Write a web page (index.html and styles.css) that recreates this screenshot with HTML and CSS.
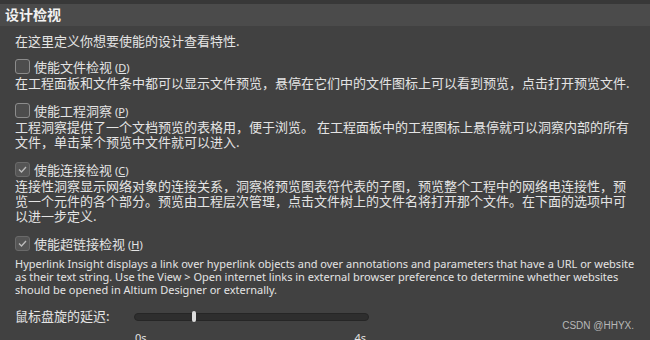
FILE: index.html
```html
<!DOCTYPE html>
<html lang="zh">
<head>
    <meta charset="UTF-8">
    <title>设计检视</title>
    <link rel="stylesheet" href="styles.css">
</head>
<body>
    <div class="panel">
        <div class="panel-title">设计检视</div>

        <div class="panel-body">
            <p class="intro">在这里定义你想要使能的设计查看特性.</p>

            <div class="option">
                <label class="check-row">
                    <span class="box"></span>
                    <span class="label">使能文件检视 <span class="key">(<u>D</u>)</span></span>
                </label>
                <p class="desc">在工程面板和文件条中都可以显示文件预览，悬停在它们中的文件图标上可以看到预览，点击打开预览文件.</p>
            </div>

            <div class="option">
                <label class="check-row">
                    <span class="box"></span>
                    <span class="label">使能工程洞察 <span class="key">(<u>P</u>)</span></span>
                </label>
                <p class="desc">工程洞察提供了一个文档预览的表格用，便于浏览。 在工程面板中的工程图标上悬停就可以洞察内部的所有文件，单击某个预览中文件就可以进入.</p>
            </div>

            <div class="option">
                <label class="check-row">
                    <span class="box checked">
                        <svg width="11" height="11" viewBox="0 0 11 11"><path d="M2 5.5 L4.5 8 L9 3" fill="none" stroke="#bdbdbd" stroke-width="1.3"/></svg>
                    </span>
                    <span class="label">使能连接检视 <span class="key">(<u>C</u>)</span></span>
                </label>
                <p class="desc">连接性洞察显示网络对象的连接关系，洞察将预览图表符代表的子图，预览整个工程中的网络电连接性，预览一个元件的各个部分。预览由工程层次管理，点击文件树上的文件名将打开那个文件。在下面的选项中可以进一步定义.</p>
            </div>

            <div class="option">
                <label class="check-row">
                    <span class="box checked">
                        <svg width="11" height="11" viewBox="0 0 11 11"><path d="M2 5.5 L4.5 8 L9 3" fill="none" stroke="#bdbdbd" stroke-width="1.3"/></svg>
                    </span>
                    <span class="label">使能超链接检视 <span class="key">(<u>H</u>)</span></span>
                </label>
                <p class="desc en">Hyperlink Insight displays a link over hyperlink objects and over annotations and parameters that have a URL or website as their text string. Use the View &gt; Open internet links in external browser preference to determine whether websites should be opened in Altium Designer or externally.</p>
            </div>

            <div class="delay-row">
                <span class="delay-label">鼠标盘旋的延迟:</span>
                <div class="slider">
                    <div class="track"><span class="thumb"></span></div>
                    <div class="ticks"><span>0s</span><span>4s</span></div>
                </div>
            </div>
        </div>

        <div class="watermark">CSDN @HHYX.</div>
    </div>
</body>
</html>
```

FILE: styles.css
```css
/* Panneau sombre */
body {
    margin: 0;
    background-color: #414141;
    font-family: "Noto Sans CJK SC", "Noto Sans", sans-serif;
    color: #e4e4e4;
    overflow: hidden;
}

.panel {
    position: relative;
    width: 650px;
    height: 340px;
    border-top: 4px solid #383838;
    box-sizing: border-box;
}

.panel-title {
    background-color: #4b4b4b;
    height: 22px;
    line-height: 21px;
    padding-left: 5px;
    font-size: 14px;
    font-weight: bold;
    color: #f2f2f2;
}

.panel-body {
    padding: 0 12px 0 15px;
}

.intro {
    margin: 6px 0 0;
    font-size: 13px;
    line-height: 17px;
}

.option {
    margin-top: 12px;
}

.intro + .option {
    margin-top: 9px;
}

.check-row {
    display: flex;
    align-items: center;
    gap: 4px;
    height: 17px;
    font-size: 13px;
}

.box {
    width: 13px;
    height: 13px;
    border: 1px solid #8c8c8c;
    border-radius: 3px;
    background-color: #4d4d4d;
    display: flex;
    align-items: center;
    justify-content: center;
}

.box.checked {
    border-color: #6a6a6a;
    background-color: #555;
}

.key {
    font-family: "Noto Sans", sans-serif;
    font-size: 11px;
}

.desc {
    margin: 0;
    font-size: 13px;
    line-height: 15px;
}

.desc.en {
    margin-top: 5px;
    font-family: "Noto Sans", sans-serif;
    font-size: 11px;
    line-height: 13px;
}

.delay-row {
    display: flex;
    align-items: flex-start;
    margin-top: 11px;
    font-size: 13px;
}

.delay-label {
    width: 119px;
    line-height: 17px;
}

.slider {
    width: 235px;
    padding-top: 6px;
}

.track {
    position: relative;
    height: 6px;
    background-color: #2e2e2e;
    border: 1px solid #262626;
    border-radius: 4px;
}

.thumb {
    position: absolute;
    left: 57px;
    top: -3px;
    width: 4px;
    height: 11px;
    border-radius: 2px;
    background-color: #dcdcdc;
}

.ticks {
    display: flex;
    justify-content: space-between;
    padding: 9px 3px 0 1px;
    font-family: "Noto Sans", sans-serif;
    font-size: 11px;
}

.watermark {
    position: absolute;
    right: 16px;
    bottom: 9px;
    font-family: "Liberation Sans", sans-serif;
    font-size: 10px;
    color: #b8b8b8;
}
```
